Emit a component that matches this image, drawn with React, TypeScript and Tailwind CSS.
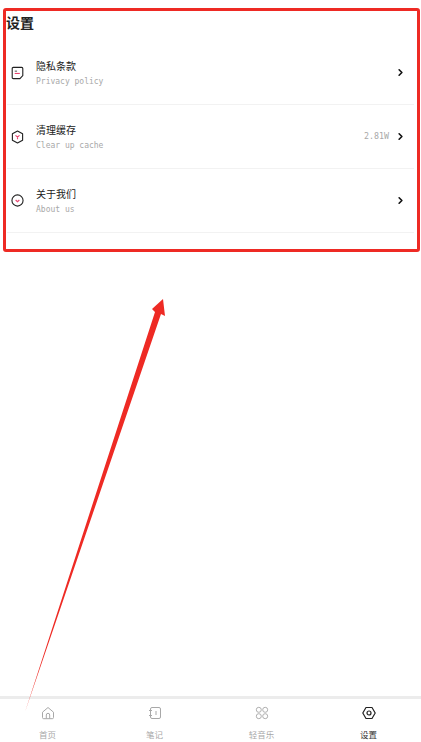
import React from "react";
import { ChevronRight } from "lucide-react";

const cjk = "font-['Noto_Sans_CJK_SC','Noto_Sans',sans-serif]";
const mono = "font-['DejaVu_Sans_Mono',monospace]";

const PrivacyIcon = () => (
  <svg width="13" height="14" viewBox="0 0 14 14" fill="none">
    <path d="M2.500 1h9a1.200 1.200 0 0 1 1.200 1.200v7.600L9.600 13H2.500a1.200 1.200 0 0 1-1.200-1.200V2.200A1.200 1.200 0 0 1 2.500 1z" stroke="#222" strokeWidth="1.200" />
    <path d="M4 5h2.500" stroke="#444" strokeWidth="1" />
    <path d="M4 7.500h5.500" stroke="#e8436e" strokeWidth="1.200" />
  </svg>
);

const CacheIcon = () => (
  <svg width="13" height="14" viewBox="0 0 14 15" fill="none">
    <path d="M7 1l5.500 3.100v6.800L7 14l-5.500-3.100V4.100z" stroke="#222" strokeWidth="1.200" strokeLinejoin="round" />
    <path d="M4.800 5.800L7 7.500l2.200-1.700M7 7.500v2.500" stroke="#e8436e" strokeWidth="1.200" />
  </svg>
);

const AboutIcon = () => (
  <svg width="13" height="13" viewBox="0 0 14 14" fill="none">
    <circle cx="7" cy="7" r="6" stroke="#222" strokeWidth="1.200" />
    <path d="M5 6.500L7 8.300l2-1.800" stroke="#e8436e" strokeWidth="1.200" />
  </svg>
);

const HomeIcon = () => (
  <svg width="14" height="14" viewBox="0 0 14 14" fill="none" stroke="#a8a8a8" strokeWidth="1">
    <path d="M1.500 6.200L7 1.500l5.500 4.700v5.300a1.200 1.200 0 0 1-1.200 1.200H2.700a1.200 1.200 0 0 1-1.200-1.200z" strokeLinejoin="round" />
    <path d="M5.300 12.500V9a1.700 1.700 0 0 1 3.400 0v3.500" />
  </svg>
);

const NoteIcon = () => (
  <svg width="14" height="14" viewBox="0 0 14 14" fill="none" stroke="#a8a8a8" strokeWidth="1">
    <rect x="2.500" y="1.500" width="10" height="11" rx="1.500" />
    <path d="M1 4.500h3M1 9.500h3M8 5v4" />
  </svg>
);

const MusicIcon = () => (
  <svg width="14" height="14" viewBox="0 0 14 14" fill="none" stroke="#b0b0b0" strokeWidth="1">
    <circle cx="3.800" cy="3.800" r="2.500" />
    <circle cx="10.200" cy="3.800" r="2.500" />
    <circle cx="3.800" cy="10.200" r="2.500" />
    <circle cx="10.200" cy="10.200" r="2.500" />
  </svg>
);

const SettingIcon = () => (
  <svg width="14" height="14" viewBox="0 0 14 14" fill="none" stroke="#222" strokeWidth="1.200">
    <path d="M4 1.500h6L13.200 7 10 12.500H4L.8 7z" strokeLinejoin="round" />
    <circle cx="7" cy="7" r="2" />
  </svg>
);

const rows = [
  { title: "隐私条款", sub: "Privacy policy", icon: <PrivacyIcon />, value: "" },
  { title: "清理缓存", sub: "Clear up cache", icon: <CacheIcon />, value: "2.81W" },
  { title: "关于我们", sub: "About us", icon: <AboutIcon />, value: "" },
];

const tabs = [
  { label: "首页", icon: <HomeIcon />, active: false },
  { label: "笔记", icon: <NoteIcon />, active: false },
  { label: "轻音乐", icon: <MusicIcon />, active: false },
  { label: "设置", icon: <SettingIcon />, active: true },
];

export default function App() {
  return (
    <div className={`relative flex h-[742px] w-[421px] flex-col overflow-hidden bg-white ${cjk}`}>
      <div className="flex-1 px-[7px]">
        <h1 className="pt-[12px] -ml-[1px] text-[14px] leading-[20px] font-bold text-[#222]">设置</h1>
        <div className="mt-[9px]">
          {rows.map((row) => (
            <div key={row.title} className="flex h-[64px] items-center border-b border-[#f2f2f2] pr-[8px]">
              <div className="ml-[4px] flex w-[25px] shrink-0 items-center">{row.icon}</div>
              <div className="flex flex-col pt-[2px]">
                <span className="text-[10px] leading-[14px] text-[#222]">{row.title}</span>
                <span className={`mt-[3px] text-[8px] leading-[12px] text-[#a8a8a8] ${mono}`}>{row.sub}</span>
              </div>
              <div className="ml-auto flex items-center gap-[6px]">
                {row.value && <span className={`text-[8.300px] text-[#a8a8a8] ${mono}`}>{row.value}</span>}
                <ChevronRight size={11} strokeWidth={3.500} color="#111" />
              </div>
            </div>
          ))}
        </div>
      </div>

      <div className="-ml-[6px] grid h-[46px] w-[428px] grid-cols-4 border-t-[3px] border-[#ececec]">
        {tabs.map((tab) => (
          <div key={tab.label} className="flex flex-col items-center pt-[7px]">
            {tab.icon}
            <span className={`mt-[8px] text-[8.500px] leading-[12px] ${tab.active ? "text-[#333]" : "text-[#a8a8a8]"}`}>{tab.label}</span>
          </div>
        ))}
      </div>

      {/* annotation drawn on top of the screenshot */}
      <div className="pointer-events-none absolute top-[8px] left-[3px] h-[244px] w-[417px] rounded-[3px] border-[3px] border-[#ee2a24]" />
      <svg className="pointer-events-none absolute top-0 left-0" width="421" height="742" viewBox="0 0 421 742">
        <path d="M25 712L155 312L152 309L163 299L165 316L161 314z" fill="#ee2a24" />
      </svg>
    </div>
  );
}
